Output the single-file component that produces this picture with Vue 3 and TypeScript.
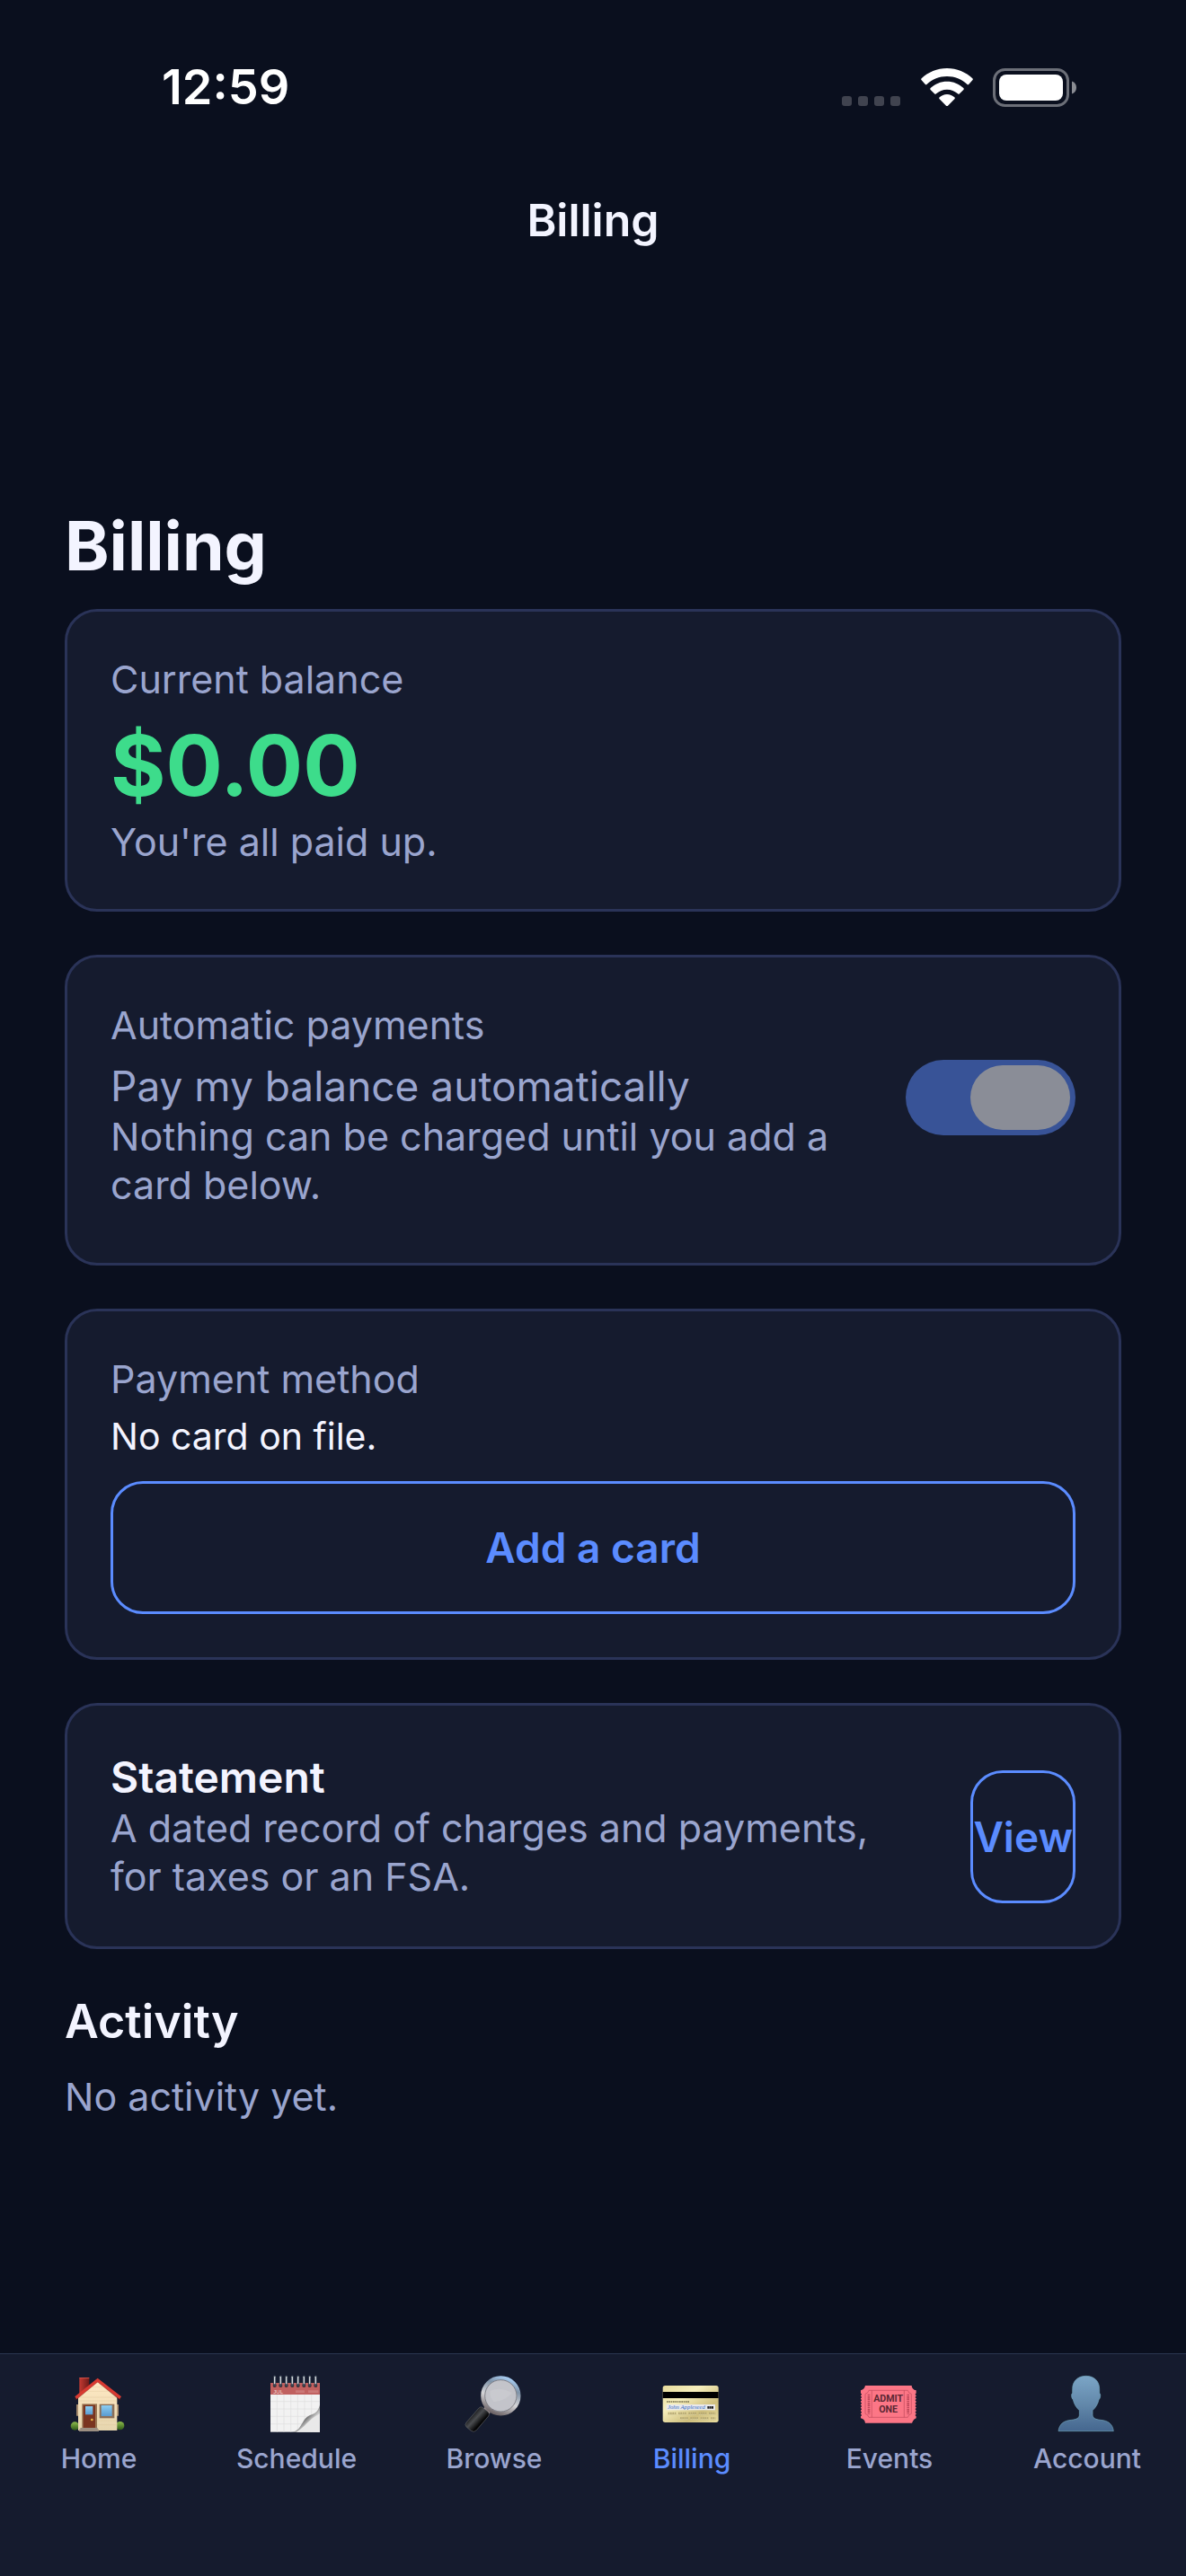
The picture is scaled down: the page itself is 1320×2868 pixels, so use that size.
<script setup lang="ts">
import { ref } from 'vue'

type TabId = 'home' | 'schedule' | 'browse' | 'billing' | 'events' | 'account'

interface Tab {
  id: TabId
  label: string
}

const tabs: Tab[] = [
  { id: 'home', label: 'Home' },
  { id: 'schedule', label: 'Schedule' },
  { id: 'browse', label: 'Browse' },
  { id: 'billing', label: 'Billing' },
  { id: 'events', label: 'Events' },
  { id: 'account', label: 'Account' },
]

const activeTab = ref<TabId>('billing')
const autoPay = ref(true)
const calendarRings: number[] = [20, 40, 59, 79, 98, 118, 137, 157]
const perforations: number[] = [62, 72, 82, 92, 102, 112, 122, 132]
</script>

<template>
  <div class="screen">
    <header>
      <div class="status-bar">
        <time class="clock">12:59</time>
        <div class="indicators">
          <svg class="signal" width="66" height="42" viewBox="0 0 66 42" aria-hidden="true">
            <rect v-for="n in 4" :key="n" :x="(n - 1) * 18" y="31" width="11" height="11" rx="3" fill="#40434f" />
          </svg>
          <svg width="58" height="42" viewBox="0 0 174 126" fill="#fff" aria-hidden="true">
            <path d="M87 0C120 0 150 13 172 34Q175 37 172 40L160 53Q157 56 154 53C136 36 113 27 87 27S38 36 20 53Q17 56 14 53L2 40Q-1 37 2 34C24 13 54 0 87 0Z" />
            <path d="M87 44C108 44 127 52 142 66Q145 69 142 72L129 85Q126 88 123 85C113 76 101 71 87 71S61 76 51 85Q48 88 45 85L32 72Q29 69 32 66C47 52 66 44 87 44Z" />
            <path d="M87 87C97 87 105 91 112 97Q115 100 112 103L90 125Q87 128 84 125L62 103Q59 100 62 97C69 91 77 87 87 87Z" />
          </svg>
          <svg width="93" height="43" viewBox="0 0 93 43" aria-hidden="true">
            <rect x="1.5" y="1.5" width="82" height="40" rx="12" fill="none" stroke="#6c6f78" stroke-width="3" />
            <rect x="7" y="7" width="71" height="29" rx="8" fill="#fff" />
            <path d="M88 14.500C91 15.500 93 18 93 21.500S91 27.500 88 28.500Z" fill="#8a8c93" />
          </svg>
        </div>
      </div>
      <div class="nav-bar">Billing</div>
    </header>

    <main class="content">
      <h1>Billing</h1>

      <div class="cards">
        <section class="card">
          <h2 class="card-label">Current balance</h2>
          <p class="amount">$0.00</p>
          <p class="muted">You're all paid up.</p>
        </section>

        <section class="card">
          <h2 class="card-label">Automatic payments</h2>
          <div class="autopay">
            <div class="grow">
              <label for="autopay" class="autopay-label">Pay my balance automatically</label>
              <p id="autopay-note" class="muted">Nothing can be charged until you add a card below.</p>
            </div>
            <input id="autopay" v-model="autoPay" class="switch" type="checkbox" role="switch" aria-describedby="autopay-note" disabled />
          </div>
        </section>

        <section class="card">
          <h2 class="card-label">Payment method</h2>
          <p class="method">No card on file.</p>
          <button type="button" class="outline-button">Add a card</button>
        </section>

        <section class="card statement">
          <div class="grow">
            <h2 class="statement-title">Statement</h2>
            <p class="muted">A dated record of charges and payments, for taxes or an FSA.</p>
          </div>
          <button type="button" class="outline-button compact">View</button>
        </section>
      </div>

      <section class="activity">
        <h2 class="section-title">Activity</h2>
        <p class="muted">No activity yet.</p>
      </section>
    </main>

    <nav class="tab-bar" aria-label="Main">
      <button
        v-for="tab in tabs"
        :key="tab.id"
        type="button"
        class="tab"
        :class="{ active: tab.id === activeTab }"
        :aria-current="tab.id === activeTab ? 'page' : undefined"
        @click="activeTab = tab.id"
      >
        <svg v-if="tab.id === 'home'" class="tab-icon" viewBox="0 0 186 186" aria-hidden="true">
          <defs>
            <linearGradient id="wall" x1="0" y1="0" x2="0" y2="1">
              <stop offset="0" stop-color="#ffe9c4" />
              <stop offset="1" stop-color="#e6d5ae" />
            </linearGradient>
            <linearGradient id="bush" x1="0" y1="0" x2="0" y2="1">
              <stop offset="0" stop-color="#8dbb4c" />
              <stop offset="1" stop-color="#2f5a18" />
            </linearGradient>
            <linearGradient id="chimney">
              <stop offset="0" stop-color="#c53a32" />
              <stop offset="1" stop-color="#6d1a18" />
            </linearGradient>
            <linearGradient id="glass" x1="0" y1="0" x2="0" y2="1">
              <stop offset="0" stop-color="#8ccdf2" />
              <stop offset="1" stop-color="#5a9bd0" />
            </linearGradient>
          </defs>
          <path d="M28 7H61V40L28 66Z" fill="url(#chimney)" />
          <path d="M28 8H61" stroke="#d9534a" stroke-width="3" />
          <circle cx="13" cy="168" r="14" fill="url(#bush)" />
          <circle cx="164" cy="167" r="14" fill="url(#bush)" />
          <path d="M18 96h8v38h-8zM152 96h7v38h-7z" fill="#a58a6c" />
          <path d="M24 72 89 18 154 72V183H24Z" fill="url(#wall)" />
          <path d="M30 72H148M24 84H154M86 150H154M86 164H154M55 52H124M72 38H106" stroke="#d9c094" stroke-width="1" />
          <path d="M14 80 89 18 165 80" fill="none" stroke="#5b1514" stroke-width="6" opacity=".55" />
          <path d="M16 74 89 15 165 74" fill="none" stroke="#d83a31" stroke-width="10" stroke-linejoin="miter" />
          <rect x="37" y="94" width="50" height="84" fill="#9a7654" />
          <rect x="41" y="98" width="40" height="77" fill="#7a3420" />
          <rect x="48" y="102" width="25" height="28" fill="url(#glass)" />
          <circle cx="70" cy="147" r="4" fill="#e8b64a" />
          <rect x="95" y="95" width="50" height="47" fill="#8b6f58" />
          <rect x="101" y="99" width="36" height="36" fill="url(#glass)" />
          <path d="M31 174H89V179H93V186H27V179H31Z" fill="#9c8f82" />
        </svg>

        <svg v-else-if="tab.id === 'schedule'" class="tab-icon" viewBox="0 0 186 186" aria-hidden="true">
          <defs>
            <linearGradient id="fold" x1="0" y1="0" x2="1" y2="1">
              <stop offset="0.300" stop-color="#fafafa" />
              <stop offset="0.480" stop-color="#6a6a6a" />
              <stop offset="0.620" stop-color="#c8c8c8" />
              <stop offset="1" stop-color="#f2f2f2" />
            </linearGradient>
          </defs>
          <rect x="6" y="24" width="165" height="164" fill="#f2f2f2" />
          <path d="M28 63V188M51 63V188M74 63V188M97 63V188M120 63V188M143 63V188M6 86H171M6 111H171M6 136H171M6 161H171" stroke="#dedede" stroke-width="2" />
          <rect x="6" y="24" width="165" height="39" fill="#c0605f" />
          <path d="M90 53H120M132 53H166" stroke="#cb7877" stroke-width="8" />
          <text x="16" y="60" font-family="Liberation Sans, sans-serif" font-size="18" fill="#f4dada">JUL</text>
          <path d="M80 188C112 182 108 146 138 132C156 126 166 118 171 98V188Z" fill="url(#fold)" />
          <path d="M92 188C122 172 128 150 171 126V188Z" fill="#e9e9e9" />
          <g v-for="x in calendarRings" :key="x">
            <circle :cx="x" cy="33" r="6" fill="#2c2528" />
            <path :d="`M${x} 3V32`" stroke="#3a4352" stroke-width="9" stroke-linecap="round" />
            <path :d="`M${x} 4V26`" stroke="#d5dade" stroke-width="4" stroke-linecap="round" />
          </g>
        </svg>

        <svg v-else-if="tab.id === 'browse'" class="tab-icon" viewBox="0 0 186 186" aria-hidden="true">
          <defs>
            <linearGradient id="rim" x1="0.700" y1="0" x2="0.300" y2="1">
              <stop offset="0" stop-color="#a8cdf2" />
              <stop offset="0.250" stop-color="#7f93a8" />
              <stop offset="0.600" stop-color="#d5d5d8" />
              <stop offset="1" stop-color="#6b6264" />
            </linearGradient>
            <linearGradient id="handle" gradientUnits="userSpaceOnUse" x1="18" y1="130" x2="48" y2="158">
              <stop offset="0" stop-color="#16171a" />
              <stop offset="0.450" stop-color="#4b4d50" />
              <stop offset="1" stop-color="#050506" />
            </linearGradient>
          </defs>
          <path d="M62 124 76 108" stroke="#a8979a" stroke-width="26" />
          <path d="M42 108Q48 101 56 107L72 120Q80 127 74 135L34 182Q25 191 16 184L1 172Q-7 164 0 156Z" fill="url(#handle)" stroke="#5e6064" stroke-width="2" />
          <circle cx="115" cy="67" r="60" fill="#c3c4ca" stroke="url(#rim)" stroke-width="13" />
          <circle cx="115" cy="67" r="53" fill="none" stroke="#5f5f66" stroke-width="2" />
          <path d="M80 50Q116 36 152 58Q132 84 92 88Q76 70 80 50Z" fill="#d0d0d4" opacity=".5" />
        </svg>

        <svg v-else-if="tab.id === 'billing'" class="tab-icon" viewBox="0 0 186 186" aria-hidden="true">
          <defs>
            <linearGradient id="gold" x1="0" y1="0" x2="1" y2="1">
              <stop offset="0" stop-color="#e8dc9c" />
              <stop offset="0.350" stop-color="#f7efbd" />
              <stop offset="0.700" stop-color="#cfbf7d" />
              <stop offset="1" stop-color="#e9dda0" />
            </linearGradient>
          </defs>
          <rect x="-4" y="33" width="186" height="123" rx="8" fill="url(#gold)" />
          <rect x="-4" y="54" width="186" height="21" fill="#000" />
          <path d="M9 87H85" stroke="#77704c" stroke-width="4" stroke-dasharray="5 2" />
          <rect x="8" y="96" width="163" height="19" fill="#e9e9ec" />
          <text x="12" y="112" font-family="Liberation Serif, serif" font-size="20" font-style="italic" fill="#3b6fc4">John Appleseed</text>
          <path d="M145 106H166" stroke="#222" stroke-width="8" stroke-dasharray="6 1" />
          <path d="M14 127H172M54 143H172" stroke="#b3a570" stroke-width="9" stroke-dasharray="5 2 5 2 5 2 5 8" />
          <path d="M14 130H172M54 146H172" stroke="#f2e9bb" stroke-width="2" stroke-dasharray="5 2 5 2 5 2 5 8" />
        </svg>

        <svg v-else-if="tab.id === 'events'" class="tab-icon" viewBox="0 0 186 186" aria-hidden="true">
          <path d="M12 33H167Q168 46 182 49V142Q171 146 168 158H12Q10 145 -3 142V49Q9 46 12 33Z" fill="#fc7686" />
          <g v-for="y in perforations" :key="y" fill="#151b2e">
            <circle cx="-3" :cy="y" r="3" />
            <circle cx="182" :cy="y" r="3" />
          </g>
          <path d="M24 49H154Q156 58 166 61V127Q156 130 154 139H24Q22 130 12 127V61Q22 58 24 49ZM34 49V139M142 49V139" fill="none" stroke="#c04a5c" stroke-width="2" />
          <path d="M24 62V128M155 62V128" stroke="#c04a5c" stroke-width="8" stroke-dasharray="5 2" />
          <g font-family="Roboto, sans-serif" font-weight="700" font-size="32" fill="#5a2733" text-anchor="middle">
            <text x="89" y="88">ADMIT</text>
            <text x="89" y="122">ONE</text>
          </g>
        </svg>

        <svg v-else class="tab-icon" viewBox="0 0 186 186" aria-hidden="true">
          <defs>
            <linearGradient id="person" x1="0" y1="0" x2="0" y2="1">
              <stop offset="0" stop-color="#7ba5c6" />
              <stop offset="0.500" stop-color="#6389ab" />
              <stop offset="1" stop-color="#45678f" />
            </linearGradient>
          </defs>
          <path d="M89 1C116 1 134 18 134 44V58C139 60 138 76 132 80C129 94 121 107 111 116V130C111 142 120 146 138 148C164 150 178 162 181 185H-3C0 162 14 150 40 148C58 146 67 142 67 130V116C57 107 49 94 46 80C40 76 39 60 44 58V44C44 18 62 1 89 1Z" fill="url(#person)" stroke="#6fa3ba" stroke-width="2" />
        </svg>
        <span>{{ tab.label }}</span>
      </button>
    </nav>
  </div>
</template>

<style>
body {
  margin: 0;
  background: #0a0f1e;
}
</style>

<style scoped>
.screen {
  display: flex;
  flex-direction: column;
  min-height: 100vh;
  background: #0a0f1e;
  color: #f3f4ff;
  font-family: Inter, 'Liberation Sans', sans-serif;
  font-size: 43px;
  line-height: 54px;
}

h1,
h2,
p {
  margin: 0;
}

button {
  font: inherit;
  cursor: pointer;
}

.status-bar {
  display: flex;
  align-items: center;
  justify-content: space-between;
  padding: 64px 122px 58px 180px;
}

.clock {
  color: #fff;
  font-size: 54px;
  font-weight: 600;
  line-height: 66px;
}

.indicators {
  display: flex;
  align-items: center;
  gap: 22px;
}

.nav-bar {
  padding: 26px 0;
  font-size: 50px;
  font-weight: 600;
  line-height: 62px;
  text-align: center;
}

.content {
  padding: 259px 72px 48px;
}

h1 {
  margin-bottom: 24px;
  font-size: 75px;
  font-weight: 700;
  line-height: 93px;
}

.cards {
  display: flex;
  flex-direction: column;
  gap: 48px;
}

.card {
  padding: 48px;
  border: 3px solid #2a3358;
  border-radius: 36px;
  background: #151b2e;
}

.card-label {
  margin-bottom: 12px;
  color: #9aa5ce;
  font-size: 43px;
  font-weight: 400;
}

.muted {
  color: #9aa5ce;
}

.amount {
  color: #3ddc8b;
  font-size: 94px;
  font-weight: 700;
  line-height: 115px;
}

.autopay {
  display: flex;
  align-items: flex-start;
  gap: 36px;
  margin-bottom: 12px;
}

.grow {
  flex: 1;
  min-width: 0;
}

.autopay-label {
  display: block;
  color: #9aa5ce;
  font-size: 46px;
  line-height: 58px;
}

.switch {
  flex: none;
  box-sizing: border-box;
  width: 189px;
  height: 84px;
  margin: 0;
  padding: 6px;
  border-radius: 42px;
  appearance: none;
  background: #5b8cff;
  opacity: 0.5;
}

.switch::before {
  display: block;
  width: 111px;
  height: 72px;
  border-radius: 36px;
  background: #fff;
  content: '';
}

.switch:checked::before {
  margin-left: auto;
}

.method {
  font-size: 41px;
  line-height: 51px;
}

.outline-button {
  display: block;
  box-sizing: border-box;
  width: 100%;
  height: 148px;
  margin-top: 24px;
  padding: 0;
  border: 3px solid #5b8cff;
  border-radius: 36px;
  background: transparent;
  color: #5b8cff;
  font-size: 46px;
  font-weight: 600;
}

.outline-button.compact {
  flex: none;
  width: auto;
}

.statement {
  display: flex;
  align-items: center;
  gap: 72px;
}

.statement-title {
  font-size: 48px;
  font-weight: 600;
  line-height: 58px;
}

.activity {
  margin-top: 48px;
}

.section-title {
  margin-bottom: 24px;
  font-size: 52px;
  font-weight: 600;
  line-height: 65px;
}

.tab-bar {
  display: flex;
  margin-top: auto;
  padding: 24px 0 113px;
  border-top: 1px solid #2a3550;
  background: #151b2e;
}

.tab {
  display: flex;
  flex: 1;
  flex-direction: column;
  align-items: center;
  gap: 12px;
  padding: 0;
  border: 0;
  background: none;
  color: #9aa5ce;
  font-size: 30px;
  font-weight: 500;
  line-height: 36px;
}

.tab.active {
  color: #5b8cff;
}

.tab-icon {
  width: 62px;
  height: 62px;
  overflow: visible;
}
</style>
